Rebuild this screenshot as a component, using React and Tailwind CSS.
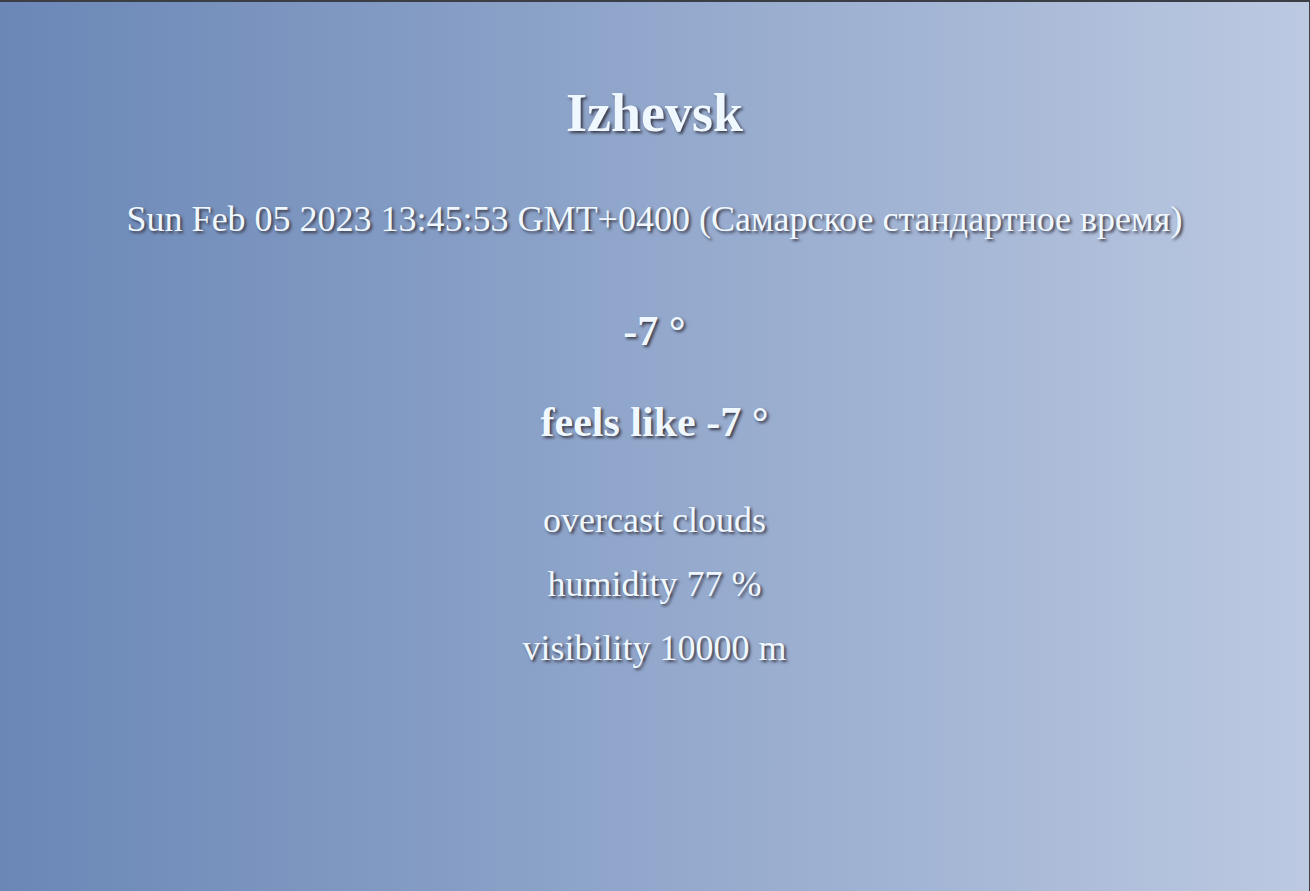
const weather = {
    city: "Izhevsk",
    date: "Sun Feb 05 2023 13:45:53 GMT+0400 (Самарское стандартное время)",
    temp: -7,
    feelsLike: -7,
    description: "overcast clouds",
    humidity: 77,
    visibility: 10000,
}

const App = () => {
    return (
        <div className="h-[891px] w-full overflow-hidden border-t-2 border-r border-[#3b3e44] bg-gradient-to-r from-[#6a87b6] to-[#bcc9e1] text-[#f0f8ff] [font-family:'Liberation_Serif','Times_New_Roman',serif] [text-shadow:2px_2px_3px_#3a3a4a]">
            <div className="flex flex-col items-center text-center pt-[81px]">
                <h1 className="text-[54px] font-bold leading-[60px]">{weather.city}</h1>
                <p className="text-[36px] leading-[44px] mt-[54px]">{weather.date}</p>
                <h2 className="text-[42px] font-bold leading-[48px] mt-[66px]">{weather.temp} °</h2>
                <h2 className="text-[42px] font-bold leading-[48px] mt-[43px]">feels like {weather.feelsLike} °</h2>
                <p className="text-[36px] leading-[44px] mt-[52px]">{weather.description}</p>
                <p className="text-[36px] leading-[44px] mt-[20px]">humidity {weather.humidity} %</p>
                <p className="text-[36px] leading-[44px] mt-[20px]">visibility {weather.visibility} m</p>
            </div>
        </div>
    )
}

export default App
